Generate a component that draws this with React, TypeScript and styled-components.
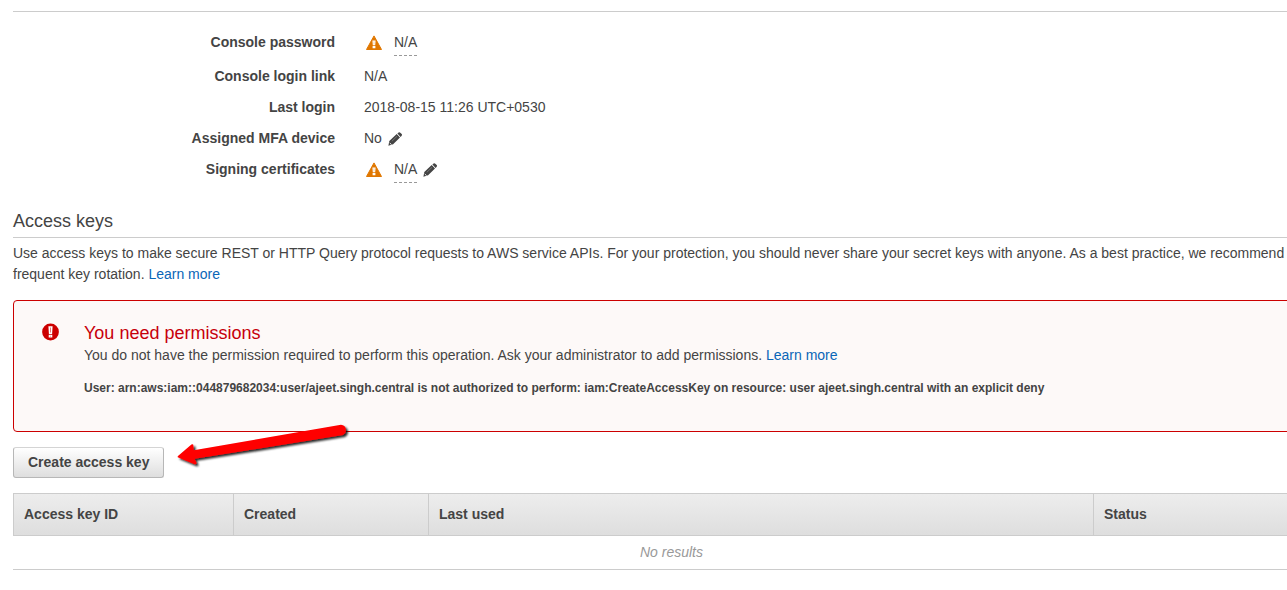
import React from "react";
import styled, { createGlobalStyle } from "styled-components";

const GlobalStyle = createGlobalStyle`
  * { box-sizing: border-box; }
  body {
    margin: 0;
    background: #fff;
    color: #444;
    font: 14px/21px "Liberation Sans", Arial, sans-serif;
    overflow-x: hidden;
  }
`;

const Page = styled.main`
  margin: 11px -43px 0 13px;
`;

const Details = styled.dl`
  display: grid;
  grid-template-columns: 322px 1fr;
  column-gap: 29px;
  row-gap: 10px;
  margin: 0;
  padding: 20px 0 26px;
  border-top: 1px solid #ccc;
`;

const Term = styled.dt`
  text-align: right;
  font-weight: bold;
`;

const Value = styled.dd`
  display: flex;
  align-items: flex-start;
  margin: 0;
`;

const Hint = styled.span`
  padding-bottom: 2px;
  border-bottom: 1px dashed #999;
`;

const WarningSvg = styled.svg`
  flex: none;
  margin: 3px 12px 0 2px;
`;

const EditButton = styled.button`
  display: flex;
  margin: 4px 0 0 6px;
  padding: 0;
  border: 0;
  background: none;
  color: #444;
  cursor: pointer;
`;

const SectionTitle = styled.h2`
  margin: 0;
  padding-bottom: 4px;
  border-bottom: 1px solid #ccc;
  font-size: 18px;
  line-height: 24px;
  font-weight: normal;
`;

const Intro = styled.p`
  margin: 5px 0 15px;
`;

const Link = styled.a`
  color: #0a66b7;
  text-decoration: none;
`;

const Alert = styled.section`
  display: flex;
  gap: 25px;
  padding: 20px 28px 32px;
  border: 1px solid #c00;
  border-radius: 4px;
  background: #fdf9f8;
`;

const AlertSvg = styled.svg`
  flex: none;
  margin-top: 2px;
`;

const AlertTitle = styled.h3`
  margin: 0;
  color: #c7000b;
  font-size: 18px;
  line-height: 24px;
  font-weight: normal;
`;

const AlertText = styled.p`
  margin: 0;
`;

const AlertDetail = styled.p`
  margin: 12px 0 0;
  font-size: 12px;
  font-weight: bold;
`;

const Toolbar = styled.div`
  position: relative;
  display: flex;
  margin: 15px 0;
`;

const Button = styled.button`
  height: 31px;
  padding: 0 14px;
  border: 1px solid #b7b7b7;
  border-top-color: #d4d4d4;
  border-radius: 3px;
  background: linear-gradient(#fff, #dedede);
  color: #444;
  font: bold 14px/21px "Liberation Sans", Arial, sans-serif;
  cursor: pointer;
`;

const ArrowSvg = styled.svg`
  position: absolute;
  top: -29px;
  left: 157px;
  pointer-events: none;
`;

const Table = styled.table`
  width: 100%;
  table-layout: fixed;
  border-collapse: separate;
  border-spacing: 0;
  border-bottom: 1px solid #ccc;
`;

const HeadCell = styled.th<{ $width?: number }>`
  width: ${(p) => (p.$width ? `${p.$width}px` : "auto")};
  height: 43px;
  padding: 0 10px;
  border: solid #ccc;
  border-width: 1px 0 1px 1px;
  background: linear-gradient(#ededed, #dedede);
  text-align: left;
`;

const EmptyCell = styled.td`
  height: 33px;
  padding: 0;
  color: #999;
  font-style: italic;
  text-align: center;
`;

const WarningIcon = () => (
  <WarningSvg width="16" height="16" viewBox="0 0 16 16" role="img" aria-label="Warning">
    <path d="M8 .9 15.5 14.5H.5Z" fill="#e07700" stroke="#e07700" strokeWidth="1" strokeLinejoin="round" />
    <path d="M6.4 5.4h3.2L9.2 10.2H6.8ZM6.6 11h2.8v2.2H6.6Z" fill="#fff" />
    <path d="M7.7 6.2h.6v3.2h-.6Z" fill="#e07700" fillOpacity=".5" />
  </WarningSvg>
);

const Edit = ({ label }: { label: string }) => (
  <EditButton type="button" aria-label={label}>
    <svg width="15" height="14" viewBox="0 0 15 14">
      <path
        d="M9.4 1.5 10.6.6q.9-.6 1.7.1l1.4 1.4q.7.8 0 1.6l-1.1 1.2ZM8.7 2.1 12 5.5 5.1 12.3.4 13.8 1.3 8.9Z"
        fill="currentColor"
      />
      <path d="m3.8 9.3 5.2-5" stroke="#fff" strokeOpacity=".45" strokeWidth=".6" fill="none" />
      <path d="m1.7 10.9 1.8 1.7" stroke="#fff" strokeWidth=".9" fill="none" />
    </svg>
  </EditButton>
);

const AlertIcon = () => (
  <AlertSvg width="17" height="18" viewBox="0 0 17 18" role="img" aria-label="Error">
    <circle cx="8.5" cy="9" r="8.4" fill="#c00" />
    <path d="M6.4 3.2h4.2L10.1 10.9H6.9ZM6.7 11.8h3.6v2.8H6.7Z" fill="#fff" />
    <path d="M8 4.4h1v5.2H8ZM8 12.8h1v.8H8Z" fill="#c00" fillOpacity=".5" />
  </AlertSvg>
);

const Arrow = () => (
  <ArrowSvg width="190" height="60" viewBox="0 0 190 60" aria-hidden="true">
    <defs>
      <filter id="arrow-shadow" x="-10%" y="-20%" width="120%" height="160%">
        <feDropShadow dx="2" dy="2" stdDeviation="1.3" floodColor="#000" floodOpacity=".85" />
      </filter>
    </defs>
    <path
      d="M7.7 38.2 21.4 26.6q2-1 2 1L23.8 32.3 171 6.8a5.4 5.4 0 0 1 2 10.2L24.6 40.8l1.8 3.8q.4 2-1.8 1.6L7.7 39.3Z"
      fill="#f00"
      filter="url(#arrow-shadow)"
    />
  </ArrowSvg>
);

export default function App() {
  return (
    <>
      <GlobalStyle />
      <Page>
        <Details>
          <Term>Console password</Term>
          <Value>
            <WarningIcon />
            <Hint>N/A</Hint>
          </Value>
          <Term>Console login link</Term>
          <Value>N/A</Value>
          <Term>Last login</Term>
          <Value>2018-08-15 11:26 UTC+0530</Value>
          <Term>Assigned MFA device</Term>
          <Value>
            No
            <Edit label="Edit assigned MFA device" />
          </Value>
          <Term>Signing certificates</Term>
          <Value>
            <WarningIcon />
            <Hint>N/A</Hint>
            <Edit label="Edit signing certificates" />
          </Value>
        </Details>

        <SectionTitle>Access keys</SectionTitle>
        <Intro>
          Use access keys to make secure REST or HTTP Query protocol requests to AWS service APIs. For your
          protection, you should never share your secret keys with anyone. As a best practice, we recommend
          frequent key rotation. <Link href="#access-keys">Learn more</Link>
        </Intro>

        <Alert role="alert">
          <AlertIcon />
          <div>
            <AlertTitle>You need permissions</AlertTitle>
            <AlertText>
              You do not have the permission required to perform this operation. Ask your administrator to add
              permissions. <Link href="#permissions">Learn more</Link>
            </AlertText>
            <AlertDetail>
              User: arn:aws:iam::044879682034:user/ajeet.singh.central is not authorized to perform:
              iam:CreateAccessKey on resource: user ajeet.singh.central with an explicit deny
            </AlertDetail>
          </div>
        </Alert>

        <Toolbar>
          <Button type="button">Create access key</Button>
          <Arrow />
        </Toolbar>

        <Table>
          <thead>
            <tr>
              <HeadCell $width={220}>Access key ID</HeadCell>
              <HeadCell $width={195}>Created</HeadCell>
              <HeadCell>Last used</HeadCell>
              <HeadCell $width={237}>Status</HeadCell>
            </tr>
          </thead>
          <tbody>
            <tr>
              <EmptyCell colSpan={4}>No results</EmptyCell>
            </tr>
          </tbody>
        </Table>
      </Page>
    </>
  );
}
